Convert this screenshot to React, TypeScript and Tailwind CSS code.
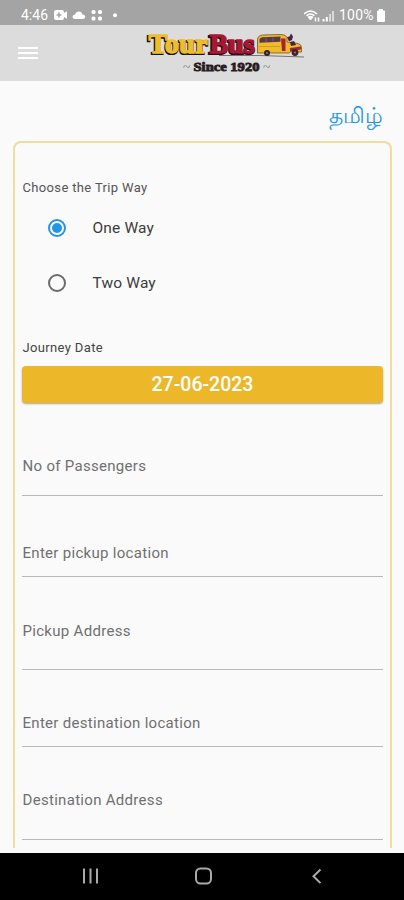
import { useState } from "react";
import clsx from "clsx";

const fields = [
  { id: "passengers", label: "No of Passengers", box: "h-[93px] pt-[53px]" },
  { id: "pickup", label: "Enter pickup location", box: "h-[81px] pt-[47px]" },
  { id: "pickupAddress", label: "Pickup Address", box: "h-[93px] pt-[44px]" },
  { id: "destination", label: "Enter destination location", box: "h-[77px] pt-[43px]" },
  { id: "destinationAddress", label: "Destination Address", box: "h-[93px] pt-[43px]" },
];

const StatusBar = () => (
  <div className="flex h-[25px] items-center justify-between bg-[#a4a4a4] pt-[5px] pr-[18px] pl-[21px] text-white">
    <div className="flex items-center">
      <span className="w-[28px] text-[14px] leading-none">4:46</span>
      <svg className="ml-[4px]" width="66" height="12" viewBox="0 0 66 12" fill="currentColor">
        <path
          fillRule="evenodd"
          d="M3 1h6q2 0 2 2v1l3-1.8v7.6L11 8v1q0 2-2 2H3q-2 0-2-2V3q0-2 2-2zM5.2 3.5v1.7H3.6v1.6h1.6v1.7h1.6V6.8h1.6V5.2H6.800V3.5z"
        />
        <path d="M22 10q-2.500 0-2.500-2.200 0-2 2.500-2.200 1-3 4-3 2.800 0 3.300 2.900 2.900.2 2.900 2.300 0 2.200-2.500 2.200z" />
        <rect x="38.500" y="1" width="4" height="4" rx="1.500" />
        <rect x="45" y="1" width="4" height="4" rx="1.500" />
        <rect x="38.500" y="7.500" width="4" height="4" rx="1.500" />
        <rect x="45" y="7.500" width="4" height="4" rx="1.500" />
        <circle cx="62" cy="6.300" r="2" />
      </svg>
    </div>
    <div className="flex items-center">
      <svg width="32" height="13" viewBox="0 0 32 13" fill="none" stroke="currentColor">
        <path d="M0 5Q6.500-1 13 5M2.500 7Q6.500 3 10.500 7" strokeWidth="1.600" />
        <path d="M4 8q2.500-1.500 5 0l-2.500 3z" fill="currentColor" />
        <path d="M11.500 8.500v4M14.500 8.500v4" strokeWidth="1.500" />
        <path d="M19.500 10v2.500M22.800 8v4.500" strokeWidth="2" />
        <path d="M26 5v7.500M29 2v10.500" strokeWidth="2" opacity=".6" />
      </svg>
      <span className="ml-[3px] w-[37px] text-[14px] leading-none tracking-[0.2px]">100%</span>
      <svg width="10" height="13" viewBox="0 0 10 13" fill="currentColor">
        <path d="M3 0h4v1.500h1q1 0 1 1V12q0 1-1 1H2q-1 0-1-1V2.500q0-1 1-1h1z" />
      </svg>
    </div>
  </div>
);

const Logo = () => (
  <svg width="164" height="48" viewBox="144 30 164 48" role="img" aria-label="TourBus">
    <g fontFamily="'Liberation Serif', serif" fontWeight="700" fontSize="28">
      <g fill="#171014" stroke="#171014" strokeWidth="2.200">
        <text x="147.500" y="55" textLength="60" lengthAdjust="spacingAndGlyphs">Tour</text>
        <text x="208.500" y="55" textLength="46" lengthAdjust="spacingAndGlyphs">Bus</text>
      </g>
      <text x="148.500" y="54.300" textLength="59" lengthAdjust="spacingAndGlyphs" fill="#f0bd27" stroke="#f0bd27" strokeWidth="1.300">
        Tour
      </text>
      <text x="209.500" y="54.300" textLength="45" lengthAdjust="spacingAndGlyphs" fill="#a91731" stroke="#a91731" strokeWidth="1.300">
        Bus
      </text>
    </g>
    <path d="M219 56.500h41l44 1.500" stroke="#6b6567" strokeWidth=".9" fill="none" />
    <path
      d="M257.500 54V41q0-4.500 5-5l18.500-.5q5 0 6 3v4.500l11 1.500q3.500 1 3.500 4v4.500h-6q-3-4-6 1h-19q-3-4-6 0z"
      fill="#f0bb28"
      stroke="#725122"
      strokeWidth=".8"
    />
    <path d="M259.500 40q1-1.800 3-1.800l18-.7v5.200l-21 1z" fill="#59384a" />
    <path d="M266 39v4M273 38.500v4" stroke="#a07850" strokeWidth=".6" />
    <path d="M259 47.500h21" stroke="#c48d22" strokeWidth=".7" />
    <path d="M281 39.500h4.500v12.500H282z" fill="#a62331" />
    <path d="M287 38l2.500-.5 1.500-3 2 3-1 3.500-3 1.500zM290 43l4-1 2 4-5 1z" fill="#47233d" />
    <path d="M290 49l11-1.500v3l-11 2z" fill="#9e2932" />
    <circle cx="267" cy="54" r="3" fill="#32202d" />
    <circle cx="295" cy="53.500" r="3.400" fill="#42202f" />
    <circle cx="267" cy="54" r="1" fill="#aa7179" />
    <circle cx="295" cy="53.500" r="1" fill="#aa7179" />
    <g fontFamily="'Liberation Serif', serif" fontWeight="700" fontSize="13.500">
      <text x="193.500" y="71.500" textLength="66" lengthAdjust="spacingAndGlyphs" fill="#261b20" stroke="#261b20" strokeWidth=".9">
        Since 1920
      </text>
      <text x="183" y="71.500" fill="#777" fontWeight="400">~</text>
      <text x="263" y="71.500" fill="#777" fontWeight="400">~</text>
    </g>
  </svg>
);

const Header = () => (
  <header className="flex h-14 items-center bg-[#dcdcdc] pl-[18px]">
    <button type="button" aria-label="Menu" className="flex w-5 flex-col gap-[3px]">
      <span className="h-[2px] bg-white" />
      <span className="h-[2px] bg-white" />
      <span className="h-[2px] bg-white" />
    </button>
    <div className="ml-[106px]">
      <Logo />
    </div>
  </header>
);

const TripOption = ({
  label,
  checked,
  onChange,
}: {
  label: string;
  checked: boolean;
  onChange: () => void;
}) => (
  <label className="flex h-[55px] items-center pl-[25.5px]">
    <input type="radio" name="trip" className="sr-only" checked={checked} onChange={onChange} />
    <span
      className={clsx(
        "flex size-[18px] items-center justify-center rounded-full border-2",
        checked ? "border-[#2494e8]" : "border-[#6b6b6b]"
      )}
    >
      {checked && <span className="size-[10px] rounded-full bg-[#2494e8]" />}
    </span>
    <span className="ml-[27px] pt-[2px] text-[15.5px] tracking-[0.15px] text-[#3c3c3c]">{label}</span>
  </label>
);

const NavBar = () => (
  <nav className="flex h-[47px] shrink-0 items-center bg-black pl-[82px]">
    <svg width="242" height="20" viewBox="0 0 242 20" fill="none" stroke="#aaa" strokeWidth="2">
      <path d="M2 1.500v15M8.500 1.500v15M15 1.500v15" />
      <rect x="114" y="1.500" width="15" height="15" rx="4.500" />
      <path d="M238.500 2.500l-7 6.800 7 6.800" />
    </svg>
  </nav>
);

export default function App() {
  const [trip, setTrip] = useState("one");

  return (
    <div className="flex h-[900px] w-[404px] flex-col overflow-hidden bg-[#fafafa] font-[Roboto,sans-serif]">
      <StatusBar />
      <Header />
      <main className="flex h-[772px] flex-col px-[13px]">
        <div className="flex h-[60px] items-center justify-end pt-[9px] pr-[8px]">
          <button type="button" lang="ta" className="text-[22px] leading-7 text-[#2494e8]">
            தமிழ்
          </button>
        </div>
        <div className="flex h-[707px] w-[379px] flex-col overflow-hidden rounded-t-lg border-x-2 border-t-2 border-[#efdc9f] px-[7px]">
          <p className="mt-[35px] pl-[0.5px] text-[13px] leading-[20px] tracking-[0.35px] text-[#555]">
            Choose the Trip Way
          </p>
          <div className="mt-[2px]">
            <TripOption label="One Way" checked={trip === "one"} onChange={() => setTrip("one")} />
            <TripOption label="Two Way" checked={trip === "two"} onChange={() => setTrip("two")} />
          </div>
          <p className="mt-[28px] pl-[0.5px] text-[13px] leading-[20px] tracking-[0.35px] text-[#444]">Journey Date</p>
          <button
            type="button"
            className="mt-[8px] h-[37px] shrink-0 rounded-[4px] bg-[#ecb82a] pt-px text-[19.5px] font-medium text-white shadow-[0_1px_2px_rgba(0,0,0,0.35)]"
          >
            27-06-2023
          </button>
          {fields.map((field) => (
            <div key={field.id} className={clsx("shrink-0 border-b border-[#b8b8b8]", field.box)}>
              <label className="block pl-[0.5px] text-[15px] leading-[20px] tracking-[0.3px] text-[#707070]">
                {field.label}
              </label>
            </div>
          ))}
        </div>
      </main>
      <NavBar />
    </div>
  );
}
